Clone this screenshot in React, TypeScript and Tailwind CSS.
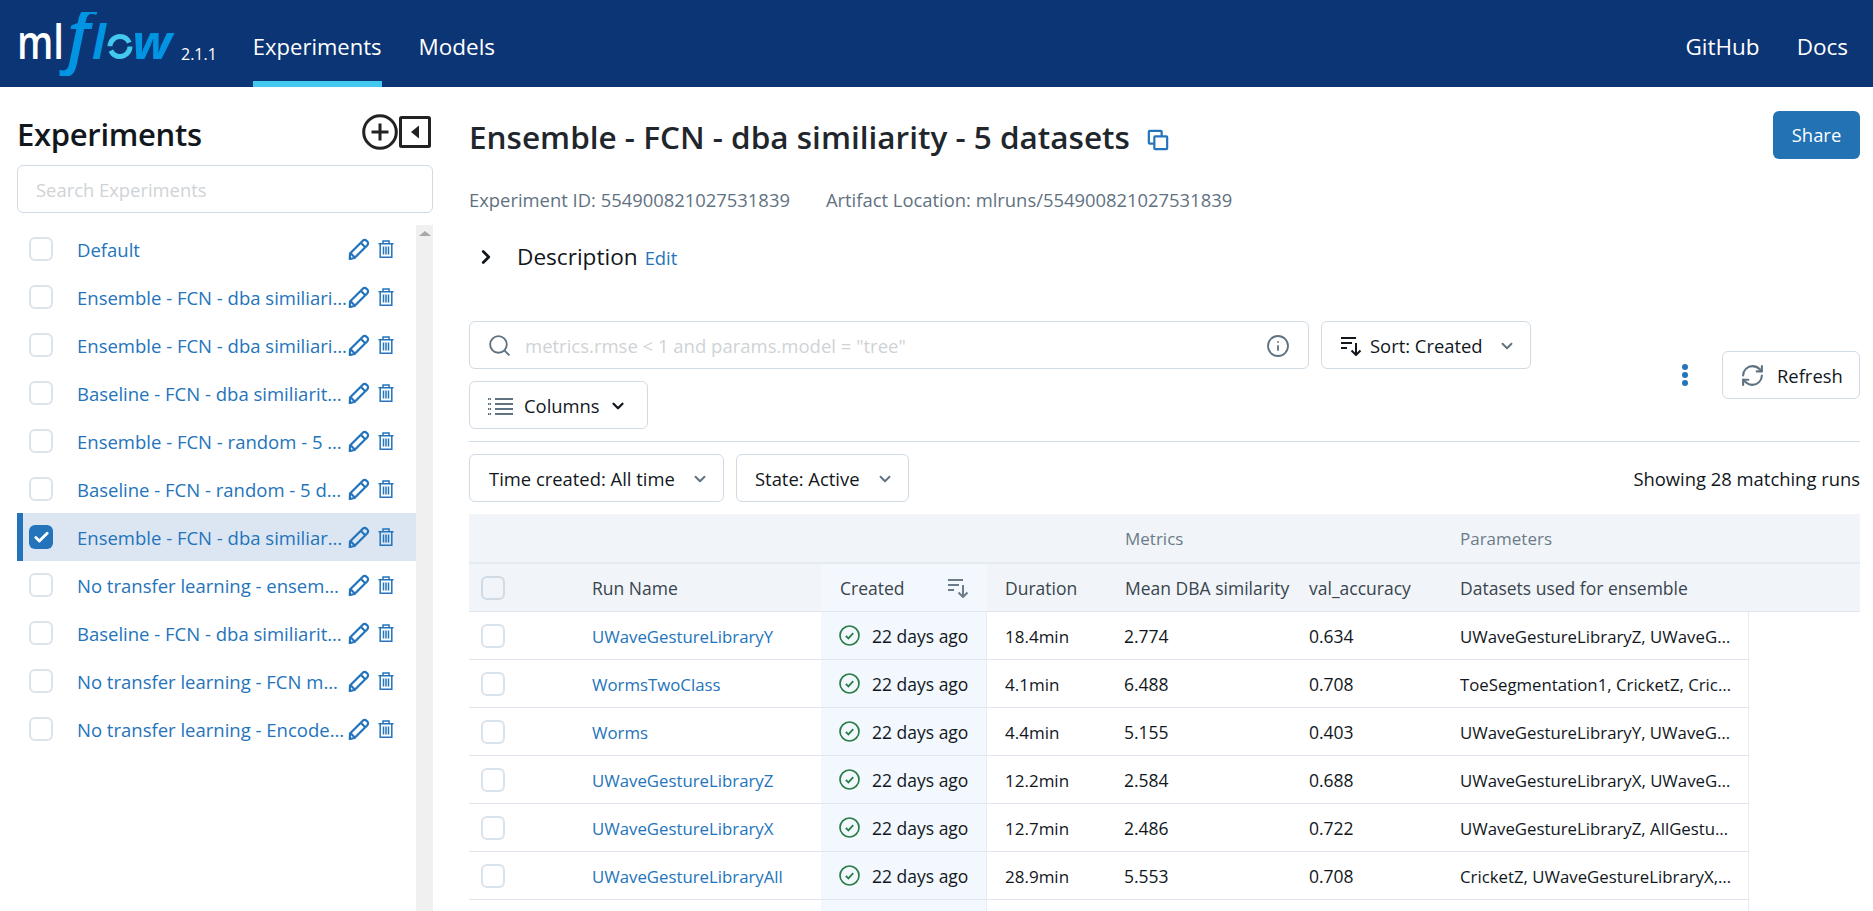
import { Check, ChevronDown, ChevronRight, Search, Info, RefreshCw } from "lucide-react";

const experiments = [
  "Default",
  "Ensemble - FCN - dba similiarity - 5 datasets (full)",
  "Ensemble - FCN - dba similiarity - 2 datasets",
  "Baseline - FCN - dba similiarity - 5 datasets",
  "Ensemble - FCN - random - 5 datasets",
  "Baseline - FCN - random - 5 datasets",
  "Ensemble - FCN - dba similiarity - 5 datasets",
  "No transfer learning - ensemble of models",
  "Baseline - FCN - dba similiarity - 2 datasets",
  "No transfer learning - FCN model training",
  "No transfer learning - Encoder model training",
];

const runs = [
  ["UWaveGestureLibraryY", "18.4min", "2.774", "0.634", "UWaveGestureLibraryZ, UWaveGestureLibraryX"],
  ["WormsTwoClass", "4.1min", "6.488", "0.708", "ToeSegmentation1, CricketZ, CricketX, Worms"],
  ["Worms", "4.4min", "5.155", "0.403", "UWaveGestureLibraryY, UWaveGestureLibraryX"],
  ["UWaveGestureLibraryZ", "12.2min", "2.584", "0.688", "UWaveGestureLibraryX, UWaveGestureLibraryY"],
  ["UWaveGestureLibraryX", "12.7min", "2.486", "0.722", "UWaveGestureLibraryZ, AllGestureWiimoteX"],
  ["UWaveGestureLibraryAll", "28.9min", "5.553", "0.708", "CricketZ, UWaveGestureLibraryX, CricketX"],
];

function Logo() {
  return (
    <svg width="158" height="64" viewBox="0 0 158 64" className="shrink-0">
      <text x="0" y="47" fontFamily="Open Sans" fontWeight="600" fontSize="47" fill="#fff" textLength="47" lengthAdjust="spacingAndGlyphs">ml</text>
      <text x="50" y="48" fontFamily="Open Sans" fontStyle="italic" fontWeight="600" fontSize="68" fill="#0194e2">f</text>
      <text x="75" y="47" fontFamily="Open Sans" fontStyle="italic" fontWeight="700" fontSize="46" fill="#0194e2">l</text>
      <circle cx="103" cy="34.5" r="10" fill="none" stroke="#43c9ed" strokeWidth="5" strokeDasharray="27 4.5" />
      <text x="115" y="47" fontFamily="Open Sans" fontStyle="italic" fontWeight="700" fontSize="46" fill="#0194e2" textLength="40" lengthAdjust="spacingAndGlyphs">w</text>
    </svg>
  );
}

function Pencil() {
  return (
    <svg width="22" height="22" viewBox="0 0 22 22" fill="none" stroke="#2374bb" strokeWidth="2.2" className="shrink-0">
      <path d="M2 15.5 14.8 2.7a2.6 2.6 0 0 1 3.7 0l.8.8a2.6 2.6 0 0 1 0 3.7L6.5 20l-4.7 1z" strokeLinejoin="round" />
      <path d="M12.8 4.8l4.4 4.4M2.6 15.2l4.2 4.4" />
    </svg>
  );
}

function Trash() {
  return (
    <svg width="16" height="18" viewBox="0 0 16 18" fill="none" stroke="#2374bb" strokeWidth="1.5" className="shrink-0">
      <path d="M.5 3.7h15M5 3.5V1h6v2.5M2.2 3.7v13.5h11.6V3.7M5.5 6.5v8M8 6.5v8M10.5 6.5v8" />
    </svg>
  );
}

function SortIcon({ color }: { color: string }) {
  return (
    <svg width="22" height="20" viewBox="0 0 22 20" fill="none" stroke={color} strokeWidth="2" className="shrink-0">
      <path d="M1 2h15M1 7h11M1 12h6M16 7v12M11.5 14.5l4.5 4.5 4.5-4.5" />
    </svg>
  );
}

function CheckCircle() {
  return (
    <svg width="21" height="21" viewBox="0 0 21 21" fill="none" stroke="#277c43" className="shrink-0">
      <circle cx="10.5" cy="10.5" r="9.5" strokeWidth="1.7" />
      <path d="M6.8 10.8l2.6 2.6 4.8-5.2" strokeWidth="1.7" />
    </svg>
  );
}

function Box({ strong }: { strong?: boolean }) {
  return (
    <div className={`h-6 w-6 shrink-0 rounded-md border-2 ${strong ? "border-[#d1dbe6] bg-transparent" : "border-[#d9e3ec] bg-white"}`} />
  );
}

function ExperimentRow({ name, selected }: { name: string; selected: boolean }) {
  return (
    <div className={`flex h-12 items-center ${selected ? "border-l-[6px] border-[#2374bb] bg-[#dce6f2] pl-[6px]" : "pl-3"}`}>
      {selected ? (
        <div className="flex h-6 w-6 shrink-0 items-center justify-center rounded-md bg-[#2374bb]">
          <Check size={17} strokeWidth={4} color="#fff" />
        </div>
      ) : (
        <div className="h-6 w-6 shrink-0 rounded-md border-2 border-[#dbe4ed]" />
      )}
      <div className="ml-[24px] mr-[1px] w-[270px] pt-[2px] text-[18.5px] text-[#2374bb]">
        <div className={`truncate ${selected ? "w-[267px]" : "w-[270px]"}`}>{name}</div>
      </div>
      <Pencil />
      <div className="ml-[8px]">
        <Trash />
      </div>
    </div>
  );
}

function Btn({ className, children }: { className: string; children: React.ReactNode }) {
  return (
    <div className={`flex h-12 items-center rounded-md border border-[#d1dbe6] bg-white pt-px text-[18.4px] text-[#11171c] ${className}`}>
      {children}
    </div>
  );
}

function RunRow({ run }: { run: string[] }) {
  return (
    <div className="flex h-12 text-[17.5px] text-[#11171c]">
      <div className="flex w-[1280px] border-b border-[#dfe6ed]">
        <div className="flex w-[111px] items-center pl-3">
          <Box />
        </div>
        <div className="flex w-[241px] items-center pl-[12px] pt-[2px] text-[16.8px] text-[#2374bb]">{run[0]}</div>
        <div className="flex w-[166px] items-center gap-[12px] border-r border-[#e6ecf2] bg-[#f3f8fe] pl-[18px]">
          <CheckCircle />
          <span className="pt-[2px]">22 days ago</span>
        </div>
        <div className="flex w-[137px] items-center pl-[18px] pt-[2px] text-[17px]">{run[1]}</div>
        <div className="flex w-[185px] items-center pt-[2px]">{run[2]}</div>
        <div className="flex w-[151px] items-center pt-[2px]">{run[3]}</div>
        <div className="flex w-[289px] items-center border-r border-[#e6ecf2] pt-[2px]">
          <span className="w-[274px] truncate text-[16.8px]">{run[4]}</span>
        </div>
      </div>
    </div>
  );
}

export default function App() {
  return (
    <div className="h-[911px] w-[1873px] overflow-hidden bg-white font-['Open_Sans',sans-serif]">
      <header className="flex h-[87px] items-center bg-[#0b3574] pl-[17px] pr-[25px] text-white">
        <Logo />
        <span className="ml-[6px] mt-[21px] text-[16px]">2.1.1</span>
        <nav className="ml-[36px] flex h-full items-stretch gap-[37px] text-[22px]">
          <div className="flex items-center border-b-[6px] border-[#43c9ed] pt-[12px]">Experiments</div>
          <div className="flex items-center pt-[6px] text-[22.5px]">Models</div>
        </nav>
        <div className="ml-auto mt-[6px] flex gap-[37px] text-[22.5px]">
          <span>GitHub</span>
          <span>Docs</span>
        </div>
      </header>

      <div className="flex h-[824px]">
        <aside className="ml-[17px] w-[416px] shrink-0">
          <div className="flex h-[78px] items-start justify-between pr-[2px] pt-[27px]">
            <h1 className="-mt-[6px] text-[31px] leading-[52px] font-semibold tracking-[-0.3px] text-[#11171c]">Experiments</h1>
            <div className="flex gap-[1px]">
              <svg width="36" height="36" viewBox="0 0 36 36" fill="none" stroke="#222" strokeWidth="3">
                <circle cx="18" cy="18" r="16.3" />
                <path d="M18 9.5v17M9.5 18h17" />
              </svg>
              <svg width="32" height="32" viewBox="0 0 32 32" className="mt-[2px]">
                <rect x="1.5" y="1.5" width="29" height="29" rx="1" fill="none" stroke="#222" strokeWidth="3" />
                <path d="M12 16l8-6.5v13z" fill="#222" />
              </svg>
            </div>
          </div>
          <div className="flex h-12 items-center rounded-md border border-[#d1dbe6] pl-[18px] pt-[2px] text-[18.4px] text-[#cfd3d6]">Search Experiments</div>
          <div className="mt-3 flex h-[686px]">
            <div className="w-[399px] shrink-0">
              {experiments.map((name, i) => (
                <ExperimentRow key={i} name={name} selected={i === 6} />
              ))}
            </div>
            <div className="flex w-[17px] justify-center bg-[#f0f0f0] pt-[6px]">
              <div className="h-0 w-0 border-x-[6px] border-b-[5px] border-x-transparent border-b-[#a8a8a8]" />
            </div>
          </div>
        </aside>

        <main className="ml-[36px] w-[1391px] shrink-0">
          <div className="flex h-[100px] items-start justify-between pt-[24px]">
            <div className="-mt-px flex items-center">
              <h2 className="text-[31.5px] leading-[54px] font-semibold text-[#1f272d]">Ensemble - FCN - dba similiarity - 5 datasets</h2>
              <svg width="22" height="22" viewBox="0 0 24 24" fill="none" stroke="#2374bb" strokeWidth="2.4" className="ml-[17px] mt-[6px]">
                <rect x="2" y="2" width="14" height="14" rx="1" />
                <rect x="8" y="8" width="14" height="14" rx="1" fill="#fff" />
              </svg>
            </div>
            <div className="flex h-12 w-[87px] items-center justify-center rounded-md bg-[#2272b4] text-[18.4px] text-white">Share</div>
          </div>
          <div className="flex h-[26px] items-center gap-[36px] text-[18.4px] text-[#5f7281]">
            <span>Experiment ID: 554900821027531839</span>
            <span>Artifact Location: mlruns/554900821027531839</span>
          </div>
          <div className="mt-[26px] flex h-9 items-center pl-[6px]">
            <ChevronRight size={22} strokeWidth={3} color="#11171c" />
            <span className="ml-[20px] text-[22.6px] text-[#11171c]">Description</span>
            <span className="ml-[7px] mt-[2px] text-[18.4px] text-[#2374bb]">Edit</span>
          </div>

          <div className="mt-[46px] flex items-start">
            <div className="w-[1062px]">
              <div className="flex gap-3">
                <Btn className="w-[840px] pl-[17px] pr-[18px]">
                  <Search size={25} strokeWidth={1.8} color="#5f7281" />
                  <span className="ml-[13px] text-[18.5px] text-[#cfd3d6]">metrics.rmse &lt; 1 and params.model = "tree"</span>
                  <Info size={24} strokeWidth={1.8} color="#5f7281" className="ml-auto" />
                </Btn>
                <Btn className="w-[210px] pl-[18px] pr-[14px]">
                  <SortIcon color="#11171c" />
                  <span className="ml-[8px]">Sort: Created</span>
                  <ChevronDown size={18} strokeWidth={2.5} color="#5f7281" className="ml-auto" />
                </Btn>
              </div>
              <Btn className="mt-3 w-[179px] pl-[18px]">
                <svg width="25" height="18" viewBox="0 0 25 18" stroke="#5f7281" strokeWidth="2">
                  <path d="M7 2h18M7 7h18M7 12h18M7 17h18" />
                  <path d="M0 2h3M0 7h3M0 12h3M0 17h3" strokeDasharray="1.5 0.5" />
                </svg>
                <span className="ml-[11px]">Columns</span>
                <ChevronDown size={18} strokeWidth={3} color="#11171c" className="ml-[9px]" />
              </Btn>
            </div>
            <div className="ml-auto mt-[30px] flex items-center">
              <svg width="8" height="24" viewBox="0 0 8 24" fill="#2374bb" className="mr-[33px]">
                <circle cx="4" cy="4" r="3" />
                <circle cx="4" cy="12" r="3" />
                <circle cx="4" cy="20" r="3" />
              </svg>
              <Btn className="w-[138px] pl-[17px]">
                <RefreshCw size={25} strokeWidth={2} color="#5f7281" />
                <span className="ml-[12px]">Refresh</span>
              </Btn>
            </div>
          </div>

          <div className="mt-3 h-px bg-[#d1dbe6]" />

          <div className="mt-[12px] flex items-center gap-3">
            <Btn className="w-[255px] pl-[19px] pr-[14px]">
              <span>Time created: All time</span>
              <ChevronDown size={18} strokeWidth={2.5} color="#5f7281" className="ml-auto" />
            </Btn>
            <Btn className="w-[173px] pl-[18px] pr-[14px]">
              <span>State: Active</span>
              <ChevronDown size={18} strokeWidth={2.5} color="#5f7281" className="ml-auto" />
            </Btn>
            <span className="ml-auto pt-px text-[18.4px] text-[#11171c]">Showing 28 matching runs</span>
          </div>

          <div className="mt-3">
            <div className="flex h-[50px] items-center border-b-2 border-[#e4ebf1] bg-[#f1f5f9] pt-px text-[17px] font-medium text-[#6b7b88]">
              <div className="ml-[656px] w-[280px]">Metrics</div>
              <div className="ml-[55px]">Parameters</div>
            </div>
            <div className="flex h-[48px] items-stretch border-b border-[#dfe6ed] bg-[#f1f5f9] text-[17.5px] font-medium text-[#39444d]">
              <div className="flex w-[111px] items-center pl-3">
                <Box strong />
              </div>
              <div className="flex w-[241px] items-center pl-[12px] pt-[2px]">Run Name</div>
              <div className="flex w-[166px] items-center justify-between bg-[#f3f8fe] pl-[19px] pr-[18px]">
                <span className="pt-[2px]">Created</span>
                <SortIcon color="#6b7b88" />
              </div>
              <div className="flex w-[137px] items-center pl-[18px] pt-[2px]">Duration</div>
              <div className="flex w-[185px] items-center whitespace-nowrap pl-px pt-[2px]">Mean DBA similarity</div>
              <div className="flex w-[151px] items-center pt-[2px]">val_accuracy</div>
              <div className="flex items-center pt-[2px]">Datasets used for ensemble</div>
            </div>
            {runs.map((run) => (
              <RunRow key={run[0]} run={run} />
            ))}
            <div className="flex h-12">
              <div className="w-[352px]" />
              <div className="w-[166px] border-r border-[#e6ecf2] bg-[#f3f8fe]" />
              <div className="w-[762px] border-r border-[#e6ecf2]" />
            </div>
          </div>
        </main>
      </div>
    </div>
  );
}
